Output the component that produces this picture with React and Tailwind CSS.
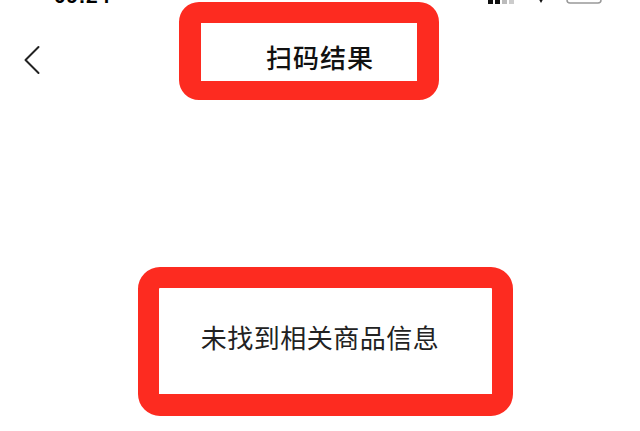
/*
  scan result page (annotated screenshot)
  red frames are annotations laid over the page
*/

const cjk = { fontFamily: '"Noto Sans CJK SC", "Noto Sans", sans-serif' };

const BackIcon = () => (
  <svg width="18" height="30" viewBox="0 0 18 30" fill="none">
    <path d="M15.5 2 L2.5 15 L15.5 28" stroke="#222" strokeWidth="2" strokeLinecap="round" strokeLinejoin="round" />
  </svg>
);

export default function App() {
  return (
    <div className="relative w-[640px] h-[431px] overflow-hidden bg-white" style={cjk}>

      {/* STATUS BAR (mostly cut off at the top) */}
      <div className="h-[5px] overflow-hidden flex justify-between items-end px-[54px]">
        <div className="-mb-[1px] text-[21px] leading-none font-bold text-black tracking-wide" style={{ fontFamily: '"Liberation Sans", sans-serif' }}>
          09:24
        </div>
        <div className="flex items-end gap-[20px] -mr-[18px]">
          <svg width="28" height="5" viewBox="0 0 28 5">
            <rect x="0" y="-10" width="5" height="14" fill="#111" />
            <rect x="7" y="-10" width="5" height="14" fill="#111" />
            <rect x="14" y="-10" width="5" height="14" fill="#bbb" />
            <rect x="21" y="-10" width="5" height="14" fill="#ccc" />
          </svg>
          <svg width="10" height="5" viewBox="0 0 10 5">
            <path d="M1 -4 L5 3 L9 -4 Z" fill="#111" />
          </svg>
          <svg width="38" height="5" viewBox="0 0 38 5">
            <rect x="1" y="-12" width="34" height="15" rx="3" fill="none" stroke="#999" strokeWidth="1.5" />
          </svg>
        </div>
      </div>

      {/* NAV BAR */}
      <div className="relative h-[108px] flex items-center justify-center -mt-[5px]">
        <button className="absolute left-[23px] top-[45px]">
          <BackIcon />
        </button>
        <h1 className="text-[26px] font-medium text-[#111] tracking-[1px] mt-[5px]">
          扫码结果
        </h1>
      </div>

      {/* BODY */}
      <div className="flex justify-center pt-[209px]">
        <p className="text-[26px] text-[#222] tracking-[0.5px]">
          未找到相关商品信息
        </p>
      </div>

      {/* ANNOTATION FRAMES */}
      <div className="absolute left-[179px] top-[2px] w-[260px] h-[98px] rounded-[20px] border-[22px] border-t-[21px] border-b-[19px] border-[#fd2b20] pointer-events-none" />
      <div className="absolute left-[138px] top-[267px] w-[375px] h-[149px] rounded-[22px] border-[21px] border-b-[22px] border-[#fd2b20] pointer-events-none" />
    </div>
  );
}
